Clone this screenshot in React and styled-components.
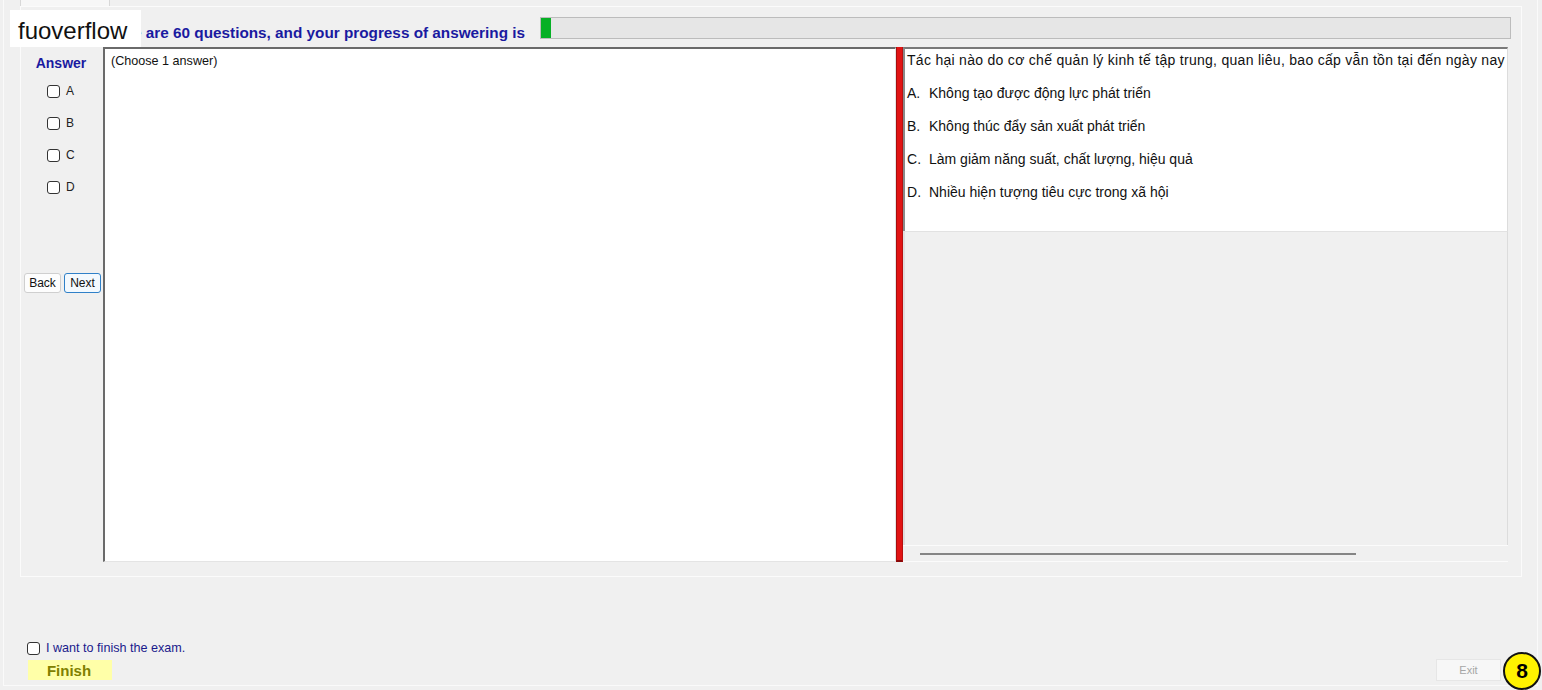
import React from "react";
import styled, { createGlobalStyle } from "styled-components";

const Global = createGlobalStyle`
  html, body { margin: 0; padding: 0; background: #f0f0f0; }
  body { font-family: "Liberation Sans", Arial, sans-serif; }
`;

const Window = styled.div`
  position: relative;
  width: 1542px;
  height: 690px;
  background: #f0f0f0;
  overflow: hidden;
`;

const Watermark = styled.div`
  position: absolute;
  left: 10px;
  top: 10px;
  width: 131px;
  height: 37px;
  background: #ffffff;
  box-sizing: border-box;
  padding-left: 8px;
  font-size: 24px;
  line-height: 42px;
  color: #111;
  z-index: 5;
`;

const Frame = styled.div`
  box-sizing: border-box;
  margin-left: 3px;
  width: 1535px;
  height: 686px;
  border-left: 1px solid #fafafa;
  border-right: 1px solid #fafafa;
  border-bottom: 1px solid #fafafa;
  display: flex;
  flex-direction: column;
`;

const TabStrip = styled.div`
  height: 6px;
  padding-left: 16px;
  display: flex;
`;

const Tab = styled.div`
  width: 90px;
  height: 6px;
  box-sizing: border-box;
  border-left: 1px solid #d8d8d8;
  border-right: 1px solid #d8d8d8;
  background: #f7f7f7;
`;

const Group = styled.div`
  box-sizing: border-box;
  margin-left: 16px;
  width: 1502px;
  height: 571px;
  border: 1px solid #fbfbfb;
  padding: 10px 10px 14px 1px;
  display: flex;
  flex-direction: column;
  gap: 8px;
`;

const HeaderRow = styled.div`
  height: 22px;
  display: flex;
  align-items: center;
  gap: 10px;
`;

const HeaderText = styled.div`
  flex: 0 0 508px;
  box-sizing: border-box;
  padding: 9px 5px 0 0;
  text-align: right;
  font-size: 15.3px;
  font-weight: bold;
  color: #1a1aa0;
  white-space: nowrap;
`;

const Progress = styled.div`
  flex: 1;
  height: 22px;
  box-sizing: border-box;
  border: 1px solid #bcbcbc;
  background: #e6e6e6;
  display: flex;
`;

const ProgressFill = styled.div`
  background: #06b025;
  height: 100%;
`;

const ContentRow = styled.div`
  height: 515px;
  display: flex;
`;

const LeftCol = styled.div`
  width: 81px;
  box-sizing: border-box;
  padding: 7px 0 0 2px;
  display: flex;
  flex-direction: column;
`;

const AnswerTitle = styled.div`
  font-size: 14px;
  font-weight: bold;
  line-height: 18px;
  color: #1a1aa0;
  text-align: center;
  padding-right: 5px;
  margin-bottom: 3px;
`;

const OptionRow = styled.label`
  height: 32px;
  display: flex;
  align-items: center;
  padding-left: 23px;
  gap: 6px;
  font-size: 12px;
  color: #222;
`;

const Box = styled.span`
  width: 13px;
  height: 13px;
  box-sizing: border-box;
  border: 1px solid #333;
  border-radius: 3px;
  background: #fff;
  display: inline-block;
`;

const NavRow = styled.div`
  margin-top: 70px;
  display: flex;
  gap: 3px;
`;

const NavButton = styled.button`
  width: 37px;
  height: 20px;
  padding: 0;
  box-sizing: border-box;
  font-family: "Liberation Sans", Arial, sans-serif;
  font-size: 12px;
  color: #111;
  border-radius: 3px;
  border: 1px solid ${p => (p.$active ? "#2f80c8" : "#cfcfcf")};
  background: ${p => (p.$active ? "#f3f9fe" : "#fdfdfd")};
`;

const AnswerArea = styled.div`
  width: 793px;
  box-sizing: border-box;
  background: #fff;
  border-top: 2px solid #6a6a6a;
  border-left: 2px solid #6a6a6a;
  border-right: 1px solid #e4e4e4;
  border-bottom: 1px solid #e4e4e4;
  padding: 5px 6px;
  font-size: 12.6px;
  color: #111;
`;

const Splitter = styled.div`
  width: 7px;
  box-sizing: border-box;
  background: #e11414;
  border-left: 1px solid #a80d0d;
  border-right: 1px solid #b81010;
  border-bottom: 2px solid #8a0a0a;
`;

const RightPanel = styled.div`
  width: 605px;
  display: flex;
  flex-direction: column;
`;

const QuestionBox = styled.div`
  height: 184px;
  box-sizing: border-box;
  background: #fff;
  border-top: 2px solid #7a7a7a;
  border-left: 2px solid #8a8a8a;
  border-right: 1px solid #dcdcdc;
  padding-left: 2px;
  font-size: 14px;
  color: #111;
`;

const Line = styled.div`
  line-height: 22px;
  margin-bottom: 11px;
  white-space: nowrap;
  letter-spacing: ${p => (p.$wide ? "0.29px" : "0")};
`;

const Letter = styled.span`
  display: inline-block;
  width: 22px;
`;

const GreyArea = styled.div`
  flex: 1;
  border-left: 2px solid #dedede;
  border-right: 1px solid #dcdcdc;
  border-top: 1px solid #e2e2e2;
`;

const ScrollTrack = styled.div`
  height: 17px;
  box-sizing: border-box;
  border-top: 1px solid #fbfbfb;
  border-bottom: 1px solid #fbfbfb;
  padding-left: 17px;
  display: flex;
  align-items: center;
`;

const ScrollThumb = styled.div`
  width: 436px;
  height: 2px;
  background: #858585;
`;

const Footer = styled.div`
  flex: 1;
  display: flex;
  align-items: flex-end;
  justify-content: space-between;
  padding: 0 36px 5px 23px;
`;

const FooterLeft = styled.div`
  display: flex;
  flex-direction: column;
  gap: 4px;
`;

const FinishCheck = styled.label`
  display: flex;
  align-items: center;
  gap: 6px;
  height: 16px;
  font-size: 12.6px;
  color: #1a1a8c;
`;

const FinishButton = styled.div`
  margin-left: 1px;
  width: 84px;
  height: 20px;
  background: #ffffa8;
  color: #808000;
  font-size: 15px;
  font-weight: bold;
  line-height: 22px;
  text-align: center;
  padding-right: 2px;
  box-sizing: border-box;
`;

const ExitButton = styled.div`
  width: 65px;
  height: 22px;
  box-sizing: border-box;
  border: 1px solid #e6e6e6;
  background: #f7f7f7;
  color: #a6a6a6;
  font-size: 11px;
  line-height: 20px;
  text-align: center;
  margin-bottom: -1px;
`;

const Badge = styled.div`
  position: absolute;
  left: 1503px;
  top: 652px;
  width: 38px;
  height: 38px;
  box-sizing: border-box;
  border: 2px solid #111;
  border-radius: 50%;
  background: #fff200;
  font-family: "Liberation Sans", Arial, sans-serif;
  font-weight: bold;
  font-size: 21px;
  line-height: 34px;
  text-align: center;
  color: #000;
`;

const options = ["A", "B", "C", "D"];

const question = {
  text: "Tác hại nào do cơ chế quản lý kinh tế tập trung, quan liêu, bao cấp vẫn tồn tại đến ngày nay",
  answers: [
    "Không tạo được động lực phát triển",
    "Không thúc đẩy sản xuất phát triển",
    "Làm giảm năng suất, chất lượng, hiệu quả",
    "Nhiều hiện tượng tiêu cực trong xã hội",
  ],
};

export default function App() {
  return (
    <Window>
      <Global />
      <Watermark>fuoverflow</Watermark>
      <Frame>
        <TabStrip>
          <Tab />
        </TabStrip>
        <Group>
          <HeaderRow>
            <HeaderText>There are 60 questions, and your progress of answering is</HeaderText>
            <Progress>
              <ProgressFill style={{ width: 10 }} />
            </Progress>
          </HeaderRow>
          <ContentRow>
            <LeftCol>
              <AnswerTitle>Answer</AnswerTitle>
              {options.map(o => (
                <OptionRow key={o}>
                  <Box />
                  {o}
                </OptionRow>
              ))}
              <NavRow>
                <NavButton>Back</NavButton>
                <NavButton $active>Next</NavButton>
              </NavRow>
            </LeftCol>
            <AnswerArea>(Choose 1 answer)</AnswerArea>
            <Splitter />
            <RightPanel>
              <QuestionBox>
                <Line $wide>{question.text}</Line>
                {question.answers.map((a, i) => (
                  <Line key={i}>
                    <Letter>{options[i]}.</Letter>
                    {a}
                  </Line>
                ))}
              </QuestionBox>
              <GreyArea />
              <ScrollTrack>
                <ScrollThumb />
              </ScrollTrack>
            </RightPanel>
          </ContentRow>
        </Group>
        <Footer>
          <FooterLeft>
            <FinishCheck>
              <Box />
              I want to finish the exam.
            </FinishCheck>
            <FinishButton>Finish</FinishButton>
          </FooterLeft>
          <ExitButton>Exit</ExitButton>
        </Footer>
      </Frame>
      <Badge>8</Badge>
    </Window>
  );
}
